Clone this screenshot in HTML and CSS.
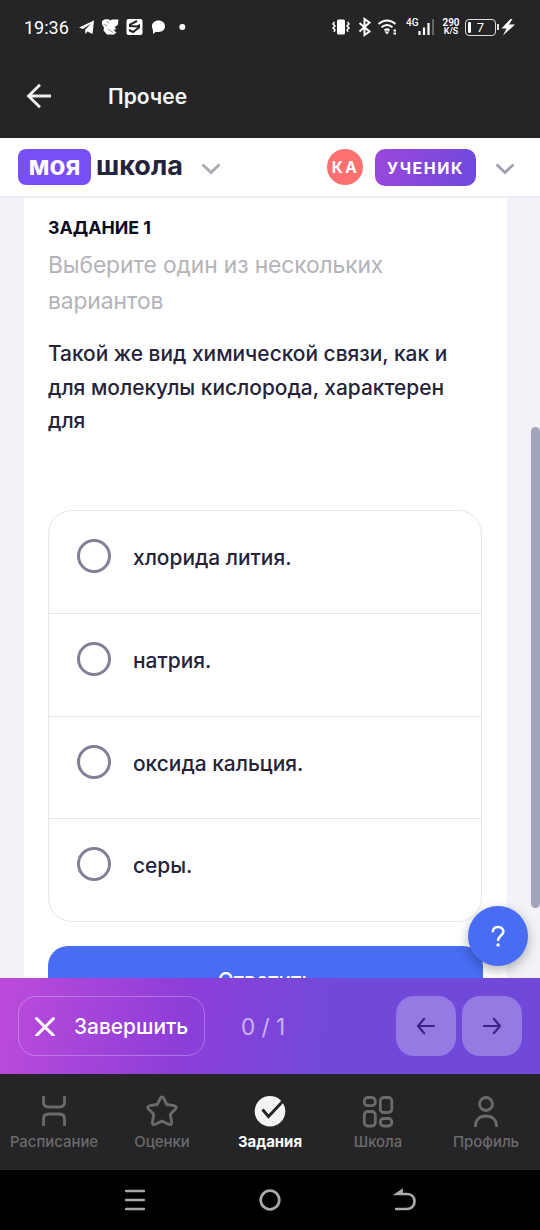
FILE: index.html
```html
<!DOCTYPE html>
<html lang="ru">
<head>
<meta charset="utf-8">
<title>Моя школа</title>
<link rel="stylesheet" href="styles.css">
</head>
<body>
<div class="screen">
  <div class="status">
    <span class="clock">19:36</span>
    <svg class="notif" width="110" height="20" viewBox="78 17 110 20" fill="#fff">
      <path d="M79 27.500 94 20.500 92.500 34 87.500 31.500 85.500 34 85 30 91 23.500 83 29Z"/>
      <path d="M102 21q2-2 6-2l2 1.500 2-1h6.500l-.5 5-3.500 3 2 1.500-3 1 3 2.500-2.500 2H107l-3.500-4 .5-3-2-3Z"/>
      <path d="M103.500 24.500l4 1M107 21l2 2.500M108 29l5 3.500" stroke="#777" stroke-width=".8" fill="none"/>
      <rect x="126.500" y="19" width="16" height="16" rx="2"/>
      <path d="m137 21-7 3.500v1.500l7 .5 2-1v2l-6 4.500-4-2" stroke="#252527" stroke-width="2" fill="none"/>
      <path d="M158.500 20.500c4 0 6.500 2.500 6.500 5.800s-2.500 5.700-6.500 5.700q-1.500 0-2.500-.3L153 34v-3.600q-1-1.800-1-4.100c0-3.300 2.500-5.800 6.500-5.800Z"/>
      <circle cx="182.300" cy="27" r="3"/>
    </svg>
    <svg class="radios" width="104" height="22" viewBox="331 16 104 22" fill="none" stroke="#fff">
      <rect x="337" y="19.500" width="8" height="15" rx="1.500" fill="#fff" stroke="none"/>
      <path d="m334.500 22-1.500 2 2 2-2 2 2 2-1 2M347.500 22l1.500 2-2 2 2 2-2 2 1 2" stroke-width="1.500"/>
      <path d="m359.500 23 10 8.500-5 3.500V19l5 3.500-10 9" stroke-width="2"/>
      <path d="M378.500 24q8.500-7 17 0M381.500 27.300q5.500-4.500 11 0M384.500 30.400q2.500-2 5 0" stroke-width="2"/>
      <path d="m384.500 31.500 2.500 3 2.500-3Z" fill="#fff" stroke="none"/>
      <path d="M393.500 30.500h2.500M393.500 33.500h2.500" stroke-width="2"/>
      <path d="M419.500 31v4M424 27.500V35M428.500 23v12" stroke-width="2.200"/>
      <path d="M433 19v16" stroke="#666" stroke-width="2"/>
    </svg>
    <span class="network">4G</span>
    <span class="speed"><b>290</b><b>K/S</b></span>
    <span class="battery"><i class="level"></i>7</span>
    <svg class="bolt" width="14" height="18" viewBox="502 18 14 18" fill="#fff"><path d="M511.500 19 502.500 28.500h5l-3.500 7 12-11h-6l3.500-5.500Z"/></svg>
  </div>

  <header class="appbar">
    <svg width="26" height="26" viewBox="26 83 26 26" fill="none" stroke="#eee" stroke-width="2.800"><path d="M51 96H28.500M40 84.800 28.500 96 40 107.200"/></svg>
    <h1>Прочее</h1>
  </header>

  <div class="sitebar">
    <span class="brand-badge">моя</span><span class="brand-word">школа</span>
    <svg class="chev" width="20" height="12" viewBox="0 0 20 12"><path d="m1.500 1.500 8.500 8 8.500-8"/></svg>
    <span class="avatar">КА</span>
    <span class="role">УЧЕНИК</span>
    <svg class="chev dark" width="20" height="12" viewBox="0 0 20 12"><path d="m1.500 1.500 8.500 8 8.500-8"/></svg>
  </div>

  <main class="content">
    <section class="card">
      <h2>ЗАДАНИЕ 1</h2>
      <p class="hint">Выберите один из нескольких<br>вариантов</p>
      <p class="question">Такой же вид химической связи, как и<br>для молекулы кислорода, характерен<br>для</p>
      <div class="options">
        <div class="option"><i class="radio"></i><span>хлорида лития.</span></div>
        <div class="option"><i class="radio"></i><span>натрия.</span></div>
        <div class="option"><i class="radio"></i><span>оксида кальция.</span></div>
        <div class="option"><i class="radio"></i><span>серы.</span></div>
      </div>
      <div class="answer">Ответить</div>
    </section>
    <i class="scrollbar"></i>
    <div class="help"><svg width="16" height="22" viewBox="0 0 16 22" fill="none" stroke="#fff" stroke-width="2.500"><path d="M2.700 7.300C2.700 3.700 5 1.900 8 1.900s5.400 1.900 5.400 4.800c0 4-5.300 3.900-5.300 9.200"/><circle cx="8.100" cy="20" r="1.700" fill="#fff" stroke="none"/></svg></div>
  </main>

  <div class="actions">
    <div class="finish">
      <svg width="20" height="20" viewBox="0 0 20 20" fill="none" stroke="#fff" stroke-width="3" stroke-linecap="round"><path d="m1.500 2.500 17 17m0-17-17 17"/></svg>
      <span>Завершить</span>
    </div>
    <span class="count">0 / 1</span>
    <div class="step"><svg width="20" height="18" viewBox="0 0 20 18"><path d="M18 9H2M8.200 1.800 2 9l6.200 7.200"/></svg></div>
    <div class="step"><svg width="20" height="18" viewBox="0 0 20 18"><path d="M2 9h16M11.800 1.800 18 9l-6.200 7.200"/></svg></div>
  </div>

  <nav class="tabs">
    <div class="tab"><svg width="34" height="34" viewBox="0 0 34 34"><path d="M6.500 2v6q0 5 5 5h11q5 0 5-5V2M6.500 32v-7q0-5 5-5h11q5 0 5 5v7"/></svg><span>Расписание</span></div>
    <div class="tab"><svg width="34" height="34" viewBox="0 0 34 34"><path stroke-linejoin="round" d="M15.200 4.500Q17 1.500 18.800 4.500L21.800 10.500 29 11.600Q33 12.500 30.300 15.300L25.300 20.300 26.600 28Q27 31.500 23.600 30.300L17 27 10.400 30.300Q7 31.500 7.400 28L8.700 20.300 3.700 15.300Q1 12.500 5 11.600L12.200 10.500Z"/></svg><span>Оценки</span></div>
    <div class="tab active"><svg width="34" height="34" viewBox="0 0 34 34"><circle cx="17" cy="17.300" r="15.300" fill="#f4f4f4" stroke="none"/><path d="m9.500 15.500 6 7L31 6" stroke="#252527" stroke-width="3"/></svg><span>Задания</span></div>
    <div class="tab"><svg width="34" height="34" viewBox="0 0 34 34"><rect x="3.300" y="3.500" width="11" height="8.200" rx="3.500"/><rect x="19.300" y="3.500" width="11.500" height="15" rx="3.500"/><rect x="3.300" y="17.500" width="11" height="14.500" rx="3.500"/><rect x="19.300" y="24.500" width="11.500" height="7.500" rx="3.500"/></svg><span>Школа</span></div>
    <div class="tab"><svg width="34" height="34" viewBox="0 0 34 34"><circle cx="17" cy="10" r="6.500"/><path d="M6.500 33v-1.500c0-6 4.500-9.500 10.500-9.500s10.500 3.500 10.500 9.500V33"/></svg><span>Профиль</span></div>
  </nav>

  <div class="sysnav">
    <svg width="24" height="24" viewBox="0 0 24 24"><path d="M3.200 3h17.600M3.200 12h17.600M3.200 21h17.600"/></svg>
    <svg width="24" height="24" viewBox="0 0 24 24"><circle cx="12" cy="12" r="9.300"/></svg>
    <svg width="24" height="24" viewBox="0 0 24 24"><path d="M3.200 21H13.500c5 0 8-3.200 8-7.700S18.500 6 13.500 6H3.800L8.500 2.800V6"/></svg>
  </div>
</div>
</body>
</html>
```
FILE: styles.css
```css
* { box-sizing: border-box; margin: 0; padding: 0; }
body { background: #000; font-family: Inter, "Noto Sans", sans-serif; }
svg { display: block; flex: none; }
.screen { width: 540px; height: 1230px; overflow: hidden; display: flex; flex-direction: column; white-space: nowrap; }
.screen > * { flex: none; }

.status { height: 54px; background: #252527; color: #fff; display: flex; align-items: center; padding-left: 24px; font-family: Roboto, sans-serif; }
.clock { width: 54px; font-size: 18px; line-height: 22px; padding-top: 2px; }
.radios { margin-left: 143px; }
.network { width: 14px; margin: -8px 0 0 -29px; font-size: 10px; line-height: 10px; font-weight: 500; }
.speed { width: 18px; margin-left: 22px; margin-right: 5px; font-size: 10px; line-height: 9px; text-align: center; }
.speed b { display: block; font-weight: 600; }
.speed b + b { font-size: 9px; }
.battery { position: relative; width: 31px; height: 17px; border: 1.500px solid #ddd; border-radius: 4px; font-size: 13px; line-height: 15px; text-align: center; }
.battery::after { content: ""; position: absolute; right: -4px; top: 4px; width: 2px; height: 6px; background: #ddd; }
.level { position: absolute; left: 2px; top: 2px; width: 3px; height: 11px; background: #fff; border-radius: 1px; }
.bolt { margin-left: 5px; }

.appbar { height: 84px; background: #252527; color: #f7f7f7; display: flex; align-items: center; padding-left: 26px; gap: 56px; }
.appbar h1 { font-size: 21px; line-height: 28px; font-weight: 600; padding-top: 2px; }

.sitebar { height: 60px; background: #fff; border-bottom: 2px solid #ebebf1; display: flex; align-items: center; padding-left: 18px; }
.brand-badge { width: 73px; height: 36px; border-radius: 8px; background: #784ff5; color: #fff; font-size: 26px; font-weight: 700; line-height: 34px; text-align: center; }
.brand-word { width: 100px; margin-left: 5px; color: #25233a; font-size: 27px; font-weight: 700; line-height: 32px; margin-top: -3px; }
.chev { margin: 4px 0 0 5px; fill: none; stroke: #aaaab2; stroke-width: 2.800; }
.avatar { width: 36px; height: 36px; margin-left: 106px; border-radius: 50%; background: #ff7070; color: #fff; font-size: 15.500px; font-weight: 700; line-height: 37px; text-align: center; letter-spacing: 2.500px; padding-left: 1px; }
.role { width: 101px; height: 37px; margin-left: 12px; border-radius: 10px; background: linear-gradient(105deg, #9c48dc, #6e48dc); color: #fff; font-size: 16px; font-weight: 700; line-height: 38px; text-align: center; letter-spacing: 1.500px; }
.chev.dark { margin-left: 19px; stroke: #a0a1b0; }

.content { position: relative; height: 780px; background: #f3f2f8; padding: 0 33px 0 24px; overflow: hidden; }
.card { height: 780px; background: #fff; padding: 18px 24px 0; }
.card h2 { color: #0b0a1d; font-size: 17.800px; line-height: 24px; font-weight: 700; }
.hint { margin-top: 7px; color: #b3b3b9; font-size: 22.800px; line-height: 36px; font-weight: 400; letter-spacing: -.1px; }
.question { margin-top: 18px; color: #25233a; font-size: 20.900px; line-height: 33.600px; font-weight: 500; }
.options { margin-top: 72px; margin-right: 1px; height: 412px; border: 1.500px solid #e8e8ec; border-radius: 24px; display: grid; grid-template-rows: repeat(4, 1fr); }
.option { display: flex; padding: 28px 0 0 28px; border-top: 1.500px solid #e8e8ec; color: #25233a; font-size: 20.900px; line-height: 38px; font-weight: 500; }
.option:first-child { border-top: 0; }
.radio { width: 34px; height: 34px; border: 3.500px solid #818196; border-radius: 50%; margin-right: 22px; }
.answer { margin-top: 24px; height: 72px; border-radius: 20px 20px 0 0; background: #486df4; color: #fff; text-align: center; font-size: 20.900px; line-height: 70px; font-weight: 500; }
.scrollbar { position: absolute; right: 0; top: 229px; width: 9px; height: 481px; border-radius: 5px; background: #a2a5b9; }
.help { position: absolute; left: 468px; top: 708px; width: 60px; height: 60px; border-radius: 50%; background: #486df4; box-shadow: 0 4px 12px rgba(0,0,0,.3); display: grid; place-items: center; }

.actions { height: 96px; background: linear-gradient(100deg, #bd4bdb 0%, #8d3ed8 34%, #7049da 62%, #7049da 100%); display: flex; align-items: center; padding-left: 18px; }
.finish { width: 187px; height: 60px; border: 1.500px solid rgba(255,255,255,.28); border-radius: 18px; display: flex; align-items: center; gap: 19px; padding-left: 16px; color: #fff; font-size: 20.900px; font-weight: 500; }
.count { width: 155px; margin-left: 36px; color: rgba(255,255,255,.6); font-size: 22.500px; font-weight: 400; }
.step { width: 60px; height: 60px; border-radius: 18px; background: #967ae4; display: grid; place-items: center; }
.step + .step { margin-left: 6px; }
.step svg { fill: none; stroke: #3f2385; stroke-width: 2.200; stroke-linecap: round; stroke-linejoin: round; }

.tabs { height: 96px; background: #252527; display: grid; grid-template-columns: repeat(5, 108px); }
.tab { display: flex; flex-direction: column; align-items: center; padding-top: 20px; color: #6b6b6d; font-size: 14.900px; line-height: 20px; font-weight: 500; }
.tab svg { fill: none; stroke: #6b6b6d; stroke-width: 2.800; }
.tab span { margin-top: 4px; }
.tab.active { color: #fff; font-weight: 700; }

.sysnav { height: 60px; background: #000; display: flex; justify-content: center; align-items: center; gap: 111px; }
.sysnav svg { fill: none; stroke: #aaa; stroke-width: 2.700; stroke-linecap: round; }
```
